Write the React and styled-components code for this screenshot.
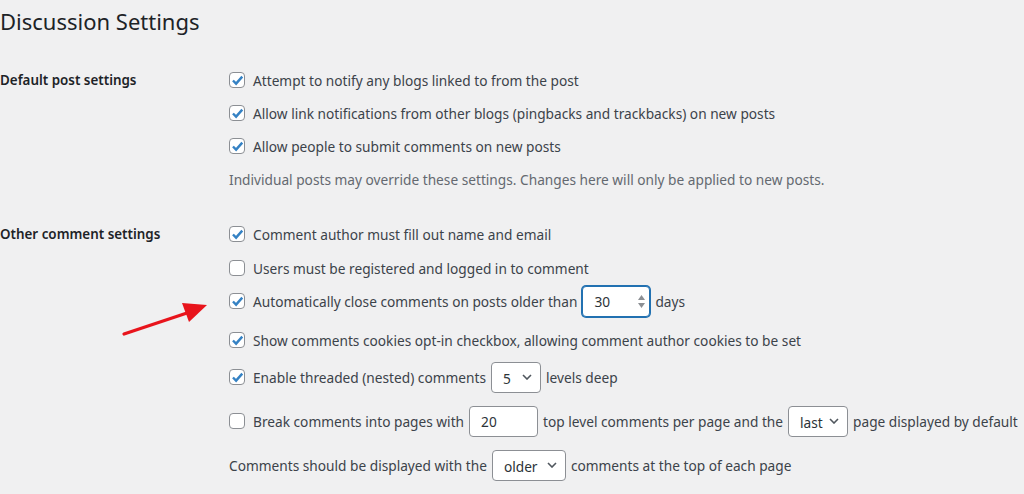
import React from "react"
import styled, { createGlobalStyle } from "styled-components"

const Global = createGlobalStyle`
  html, body {
    margin: 0;
    padding: 0;
    background: #f0f0f1;
  }
  body {
    font-family: "Noto Sans", "Open Sans", sans-serif;
    font-size: 13.7px;
    color: #3c434a;
  }
`

const Page = styled.div`
  width: 1024px;
  height: 494px;
  overflow: hidden;
  position: relative;
`

const Title = styled.h1`
  margin: 0;
  height: 64px;
  padding-top: 7px;
  box-sizing: border-box;
  font-size: 22px;
  font-weight: 400;
  color: #1d2327;
  line-height: 29px;
`

const Section = styled.div`
  display: grid;
  grid-template-columns: 229px 1fr;
  margin-top: ${(p) => p.$top || 0}px;
`

const Label = styled.div`
  height: 32px;
  display: flex;
  align-items: center;
  font-weight: 600;
  font-size: 13.4px;
  color: #1d2327;
  white-space: nowrap;
`

const Lines = styled.div`
  display: flex;
  flex-direction: column;
`

const Line = styled.div`
  height: 32px;
  margin-top: ${(p) => p.$top || 0}px;
  display: flex;
  align-items: center;
  gap: 5px;
  white-space: nowrap;
`

const Description = styled(Line)`
  color: #646970;
`

const Box = styled.span`
  width: 16px;
  height: 16px;
  box-sizing: border-box;
  border: 1px solid #8c8f94;
  border-radius: 4px;
  background: #fff;
  display: inline-flex;
  align-items: center;
  justify-content: center;
  margin-right: 3px;
  flex: none;
`

const Field = styled.span`
  display: inline-flex;
  align-items: center;
  justify-content: space-between;
  box-sizing: border-box;
  width: ${(p) => p.$w}px;
  height: 31px;
  padding: 0 8px 0 11px;
  background: #fff;
  border: 1px solid ${(p) => (p.$focus ? "#2271b1" : "#8c8f94")};
  box-shadow: ${(p) => (p.$focus ? "0 0 0 1px #2271b1" : "none")};
  border-radius: 4px;
  color: #2c3338;
`

const Spin = styled.span`
  display: flex;
  flex-direction: column;
  gap: 3px;
  margin-right: -4px;
`

const Arrow = styled.svg`
  position: absolute;
  left: 118px;
  top: 298px;
`

function Check({ on }) {
  return (
    <Box>
      {on && (
        <svg width="13" height="13" viewBox="0 0 12 12">
          <path d="M1.8 6 L4.7 8.9 L10.4 2.4" fill="none" stroke="#3582c4" strokeWidth="2.2" />
        </svg>
      )}
    </Box>
  )
}

function Select({ value, w }) {
  return (
    <Field $w={w}>
      <span style={{ marginTop: 2 }}>{value}</span>
      <svg width="10" height="6" viewBox="0 0 10 6">
        <path d="M1 1 L5 5 L9 1" fill="none" stroke="#50575e" strokeWidth="1.6" />
      </svg>
    </Field>
  )
}

function NumberInput({ value, w, focus }) {
  return (
    <Field $w={w} $focus={focus}>
      <span>{value}</span>
      {focus && (
        <Spin>
          <svg width="7" height="5" viewBox="0 0 7 5"><path d="M3.5 0 L7 5 L0 5Z" fill="#8c8f94" /></svg>
          <svg width="7" height="5" viewBox="0 0 7 5"><path d="M0 0 L7 0 L3.5 5Z" fill="#8c8f94" /></svg>
        </Spin>
      )}
    </Field>
  )
}

export default function App() {
  return (
    <Page>
      <Global />
      <Title>Discussion Settings</Title>
      <Section>
        <Label>Default post settings</Label>
        <Lines>
          <Line><Check on />Attempt to notify any blogs linked to from the post</Line>
          <Line $top={1}><Check on />Allow link notifications from other blogs (pingbacks and trackbacks) on new posts</Line>
          <Line $top={1}><Check on />Allow people to submit comments on new posts</Line>
          <Description $top={1}>Individual posts may override these settings. Changes here will only be applied to new posts.</Description>
        </Lines>
      </Section>
      <Section $top={23}>
        <Label>Other comment settings</Label>
        <Lines>
          <Line><Check on />Comment author must fill out name and email</Line>
          <Line $top={2}><Check />Users must be registered and logged in to comment</Line>
          <Line $top={1}>
            <Check on />Automatically close comments on posts older than
            <NumberInput value="30" w={68} focus />days
          </Line>
          <Line $top={7}><Check on />Show comments cookies opt-in checkbox, allowing comment author cookies to be set</Line>
          <Line $top={5}>
            <Check on />Enable threaded (nested) comments
            <Select value="5" w={50} />levels deep
          </Line>
          <Line $top={12}>
            <Check />Break comments into pages with
            <NumberInput value="20" w={69} />top level comments per page and the
            <Select value="last" w={60} />page displayed by default
          </Line>
          <Line $top={12}>
            Comments should be displayed with the
            <Select value="older" w={74} />comments at the top of each page
          </Line>
        </Lines>
      </Section>
      <Arrow width="95" height="42" viewBox="0 0 95 42">
        <line x1="6" y1="36" x2="72" y2="14" stroke="#e8141c" strokeWidth="3.2" strokeLinecap="round" />
        <path d="M64 5 L89 7 L71 24 Z" fill="#e8141c" />
      </Arrow>
    </Page>
  )
}
